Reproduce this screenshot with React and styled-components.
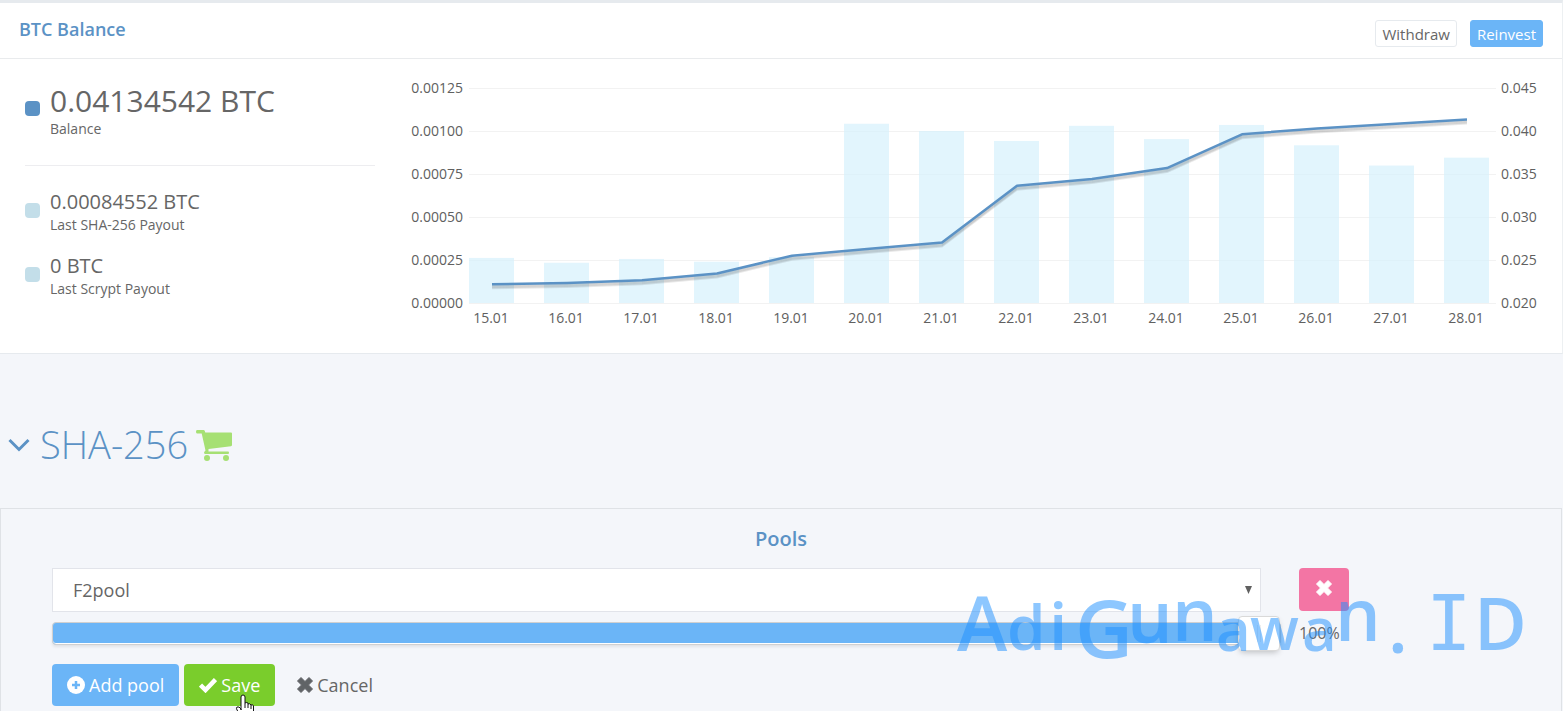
import React, { useState } from "react";
import styled, { createGlobalStyle, css } from "styled-components";

const GlobalStyle = createGlobalStyle`
  * {
    box-sizing: border-box;
  }

  body {
    margin: 0;
    background: #f4f6fa;
    color: #666;
    font-family: "Open Sans", sans-serif;
    font-size: 14px;
  }

  button,
  input,
  select {
    font-family: inherit;
  }
`;

const Page = styled.main`
  position: relative;
  overflow: hidden;
`;

const Panel = styled.section`
  background: #fff;
  border-top: 3px solid #e6eaee;
  border-bottom: 1px solid #e6eaee;
  border-right: 1px solid #edf0f2;
`;

const PanelHeader = styled.header`
  display: flex;
  align-items: center;
  justify-content: space-between;
  height: 56px;
  padding: 6px 19px 0;
  border-bottom: 1px solid #e9ebed;
`;

const PanelTitle = styled.h2`
  margin: 0 0 10px;
  color: #5b92c5;
  font-size: 18px;
  font-weight: 600;
  line-height: 24px;
`;

const HeaderActions = styled.div`
  display: flex;
  gap: 13px;
`;

const SmallButton = styled.button`
  height: 27px;
  padding: 0 6px;
  border: 1px solid ${(props) => (props.$primary ? "#6bb5f7" : "#e6eaee")};
  border-radius: 3px;
  background: ${(props) => (props.$primary ? "#6bb5f7" : "#fff")};
  color: ${(props) => (props.$primary ? "#fff" : "#666")};
  font-size: 15px;
  line-height: 24px;
  cursor: pointer;
`;

const PanelBody = styled.div`
  display: grid;
  grid-template-columns: 350px 1fr;
  gap: 30px;
  padding: 20px 19px 24px 25px;
`;

const Stats = styled.div`
  display: flex;
  flex-direction: column;
`;

const Stat = styled.div`
  display: flex;
  align-items: flex-start;
  gap: 10px;
  margin-bottom: ${(props) => (props.$main ? "30px" : "18px")};
`;

const Marker = styled.span`
  width: 15px;
  height: 15px;
  margin-top: ${(props) => (props.$main ? "22px" : "16px")};
  border-radius: 4px;
  background: ${(props) => (props.$main ? "#5b92c5" : "#c3dee9")};
`;

const StatValue = styled.div`
  font-size: ${(props) => (props.$main ? "30px" : "20px")};
  line-height: ${(props) => (props.$main ? "44px" : "30px")};
`;

const StatLabel = styled.div`
  font-size: 14px;
  line-height: ${(props) => (props.$main ? "12px" : "16px")};
`;

const Divider = styled.hr`
  width: 100%;
  margin: 0 0 21px;
  border: 0;
  border-top: 1px solid #ededf0;
`;

const ChartSvg = styled.svg`
  display: block;
  width: 100%;
  height: auto;

  text {
    fill: #606060;
    font-size: 14px;
  }
`;

const SectionHeading = styled.div`
  display: flex;
  align-items: center;
  height: 154px;
  padding: 28px 8px 0;
`;

const SectionTitle = styled.h1`
  margin: 0 8px 2px 10px;
  color: #5b92c5;
  font-size: 38px;
  font-weight: 300;
  line-height: 52px;
`;

const IconButton = styled.button`
  display: flex;
  padding: 0;
  border: 0;
  background: none;
  cursor: pointer;
`;

const PoolsPanel = styled.section`
  margin-right: 1px;
  padding: 17px 51px 5px;
  border: 1px solid #dfe2e6;
  border-bottom: 0;
`;

const PoolsTitle = styled.h3`
  margin: 0 0 16px;
  color: #5b92c5;
  font-size: 20px;
  font-weight: 600;
  line-height: 26px;
  text-align: center;
`;

const PoolGrid = styled.div`
  display: grid;
  grid-template-columns: 1fr 211px;
  column-gap: 38px;
  row-gap: 4px;
`;

const SelectWrap = styled.div`
  display: grid;
  align-items: center;

  > * {
    grid-area: 1 / 1;
  }
`;

const PoolSelect = styled.select`
  width: 100%;
  height: 44px;
  padding: 0 20px;
  appearance: none;
  border: 1px solid #e2e4ea;
  border-radius: 0;
  background: #fff;
  color: #666;
  font-size: 18px;
`;

const Arrow = styled.svg`
  justify-self: end;
  margin-right: 9px;
  pointer-events: none;
`;

const DeleteButton = styled.button`
  display: flex;
  align-items: center;
  justify-content: center;
  width: 50px;
  height: 43px;
  padding: 0 0 4px;
  border: 0;
  border-radius: 4px;
  background: #f375a4;
  cursor: pointer;
`;

const track = css`
  height: 23px;
  border: 1px solid #d0d0d0;
  border-radius: 4px;
  background: #6bb5f7;
  box-shadow: inset 0 -1px 0 #fff, 0 2px 3px rgba(0, 0, 0, 0.08);
`;

const Slider = styled.input`
  width: calc(100% + 20px);
  height: 34px;
  margin: 0;
  appearance: none;
  background: none;

  &::-webkit-slider-runnable-track {
    ${track}
  }

  &::-webkit-slider-thumb {
    width: 42px;
    height: 35px;
    margin-top: -7px;
    appearance: none;
    border: 1px solid #d9d9d9;
    border-radius: 4px;
    background: linear-gradient(#eee, #eee) 18px 8px / 1px 17px no-repeat,
      linear-gradient(#eee, #eee) 21px 8px / 1px 17px no-repeat, #fff;
    box-shadow: 0 3px 6px -2px rgba(0, 0, 0, 0.25);
  }
`;

const Percent = styled.output`
  font-size: 16px;
  line-height: 34px;
`;

const Actions = styled.div`
  display: flex;
  gap: 5px;
  margin-top: 14px;
`;

const colors = {
  add: "#6bb5f7",
  save: "#7acd2c",
  plain: "transparent",
};

const ActionButton = styled.button`
  position: relative;
  display: flex;
  align-items: center;
  gap: 4px;
  height: 42px;
  padding: 0 ${(props) => (props.$kind === "plain" ? "17px" : "15px")};
  border: 0;
  border-radius: 4px;
  background: ${(props) => colors[props.$kind]};
  color: ${(props) => (props.$kind === "plain" ? "#666" : "#fff")};
  font-size: 18px;
  line-height: 42px;
  cursor: pointer;
`;

const Pointer = styled.svg`
  position: absolute;
  top: 30px;
  left: 51px;
  pointer-events: none;
`;

const Watermark = styled.svg`
  position: absolute;
  right: 26px;
  bottom: 26px;
  pointer-events: none;
  fill: #1e90ff;
  opacity: 0.5;
  font-weight: 600;
`;

const history = [
  { day: "15.01", payout: 0.000262, balance: 0.02217 },
  { day: "16.01", payout: 0.000234, balance: 0.02233 },
  { day: "17.01", payout: 0.000256, balance: 0.02264 },
  { day: "18.01", payout: 0.00024, balance: 0.02343 },
  { day: "19.01", payout: 0.000266, balance: 0.0255 },
  { day: "20.01", payout: 0.001042, balance: 0.02627 },
  { day: "21.01", payout: 0.001, balance: 0.02703 },
  { day: "22.01", payout: 0.000942, balance: 0.03363 },
  { day: "23.01", payout: 0.00103, balance: 0.03442 },
  { day: "24.01", payout: 0.000953, balance: 0.03569 },
  { day: "25.01", payout: 0.001035, balance: 0.03962 },
  { day: "26.01", payout: 0.000917, balance: 0.04029 },
  { day: "27.01", payout: 0.000799, balance: 0.04081 },
  { day: "28.01", payout: 0.000845, balance: 0.04135 },
];

const payoutTicks = ["0.00125", "0.00100", "0.00075", "0.00050", "0.00025", "0.00000"];
const balanceTicks = ["0.045", "0.040", "0.035", "0.030", "0.025", "0.020"];

const plot = { left: 64, right: 1091, top: 9, height: 215, step: 75, bar: 45 };

function BalanceChart() {
  const bottom = plot.top + plot.height;
  const points = history
    .map((item, i) => {
      const x = plot.left + 23 + i * plot.step;
      const y = bottom - ((item.balance - 0.02) / 0.025) * plot.height;
      return `${x},${y}`;
    })
    .join(" ");

  return (
    <ChartSvg viewBox="0 0 1138 250" role="img" aria-label="BTC balance history">
      {payoutTicks.map((tick, i) => {
        const y = Math.round(plot.top + (i * plot.height) / 5);
        return (
          <g key={tick}>
            <rect x={plot.left} y={y} width={plot.right - plot.left} height="1" fill="#f2f2f2" />
            <text x="58" y={y + 5} textAnchor="end">
              {tick}
            </text>
            <text x="1096" y={y + 5}>
              {balanceTicks[i]}
            </text>
          </g>
        );
      })}
      {history.map((item, i) => {
        const height = (item.payout / 0.00125) * plot.height;
        const x = plot.left + i * plot.step;
        return (
          <g key={item.day}>
            <rect
              x={x}
              y={bottom - height}
              width={plot.bar}
              height={height}
              fill="#d4f0fc"
              fillOpacity="0.68"
            />
            <text x={x + 22} y={bottom + 20} textAnchor="middle">
              {item.day}
            </text>
          </g>
        );
      })}
      <g fill="none" strokeWidth="2" strokeLinejoin="round">
        {[4, 3, 2, 1].map((offset) => (
          <polyline
            key={offset}
            points={points}
            stroke="#000"
            strokeOpacity="0.09"
            transform={`translate(0 ${offset})`}
          />
        ))}
        <polyline points={points} stroke="#5b92c5" strokeWidth="2.5" />
      </g>
    </ChartSvg>
  );
}

function CrossIcon({ size, color }) {
  return (
    <svg width={size} height={size} viewBox="0 0 16 16" aria-hidden="true">
      <path
        d="M4 .5 8 4.5 12 .5 15.5 4 11.5 8 15.5 12 12 15.5 8 11.5 4 15.5 .5 12 4.5 8 .5 4Z"
        fill={color}
        stroke={color}
        strokeLinejoin="round"
      />
    </svg>
  );
}

function CartIcon() {
  return (
    <svg width="36" height="31" viewBox="0 0 36 31" fill="#a6e073" aria-hidden="true">
      <path d="M1 0h6.500q1 0 1.300 1l.5 1.500H35q1 0 1 1V15q0 1-1 1.200L12.500 19v2.500H32q1 0 1 1.200t-1 1.200H9q-1-.1-1-1.200 0-.8 1.500-2.200L5.700 3.500H1Q0 3.200 0 1.700 0 .3 1 0Z" />
      <circle cx="11" cy="28" r="3" />
      <circle cx="30" cy="28" r="3" />
    </svg>
  );
}

// each letter sits on its own baseline, like hand lettering
const letters = [
  { char: "A", x: 0, y: 61, size: 76 },
  { char: "d", x: 50, y: 60, size: 62 },
  { char: "i", x: 92, y: 60, size: 66 },
  { char: "G", x: 118, y: 68, size: 80 },
  { char: "u", x: 170, y: 53, size: 72 },
  { char: "n", x: 215, y: 51, size: 72 },
  { char: "a", x: 259, y: 61, size: 60 },
  { char: "w", x: 293, y: 60, size: 60 },
  { char: "a", x: 345, y: 61, size: 60 },
  { char: "n", x: 378, y: 51, size: 72 },
  { char: ".", x: 431, y: 63, size: 72 },
  { char: "I", x: 469, y: 60, size: 76, mono: true },
  { char: "D", x: 517, y: 60, size: 72 },
];

function SiteMark() {
  return (
    <Watermark width="580" height="125" viewBox="0 -30 580 125">
      <text>
        {letters.map((letter, i) => (
          <tspan
            key={i}
            x={letter.x}
            y={letter.y}
            fontSize={letter.size}
            fontFamily={letter.mono ? "DejaVu Sans Mono" : "Open Sans"}
            fontWeight={letter.mono ? 400 : 600}
          >
            {letter.char}
          </tspan>
        ))}
      </text>
    </Watermark>
  );
}

function StatRow({ value, label, main }) {
  return (
    <Stat $main={main}>
      <Marker $main={main} />
      <div>
        <StatValue $main={main}>{value}</StatValue>
        <StatLabel $main={main}>{label}</StatLabel>
      </div>
    </Stat>
  );
}

function App() {
  const [pool, setPool] = useState("F2pool");
  const [share, setShare] = useState(100);

  return (
    <Page>
      <GlobalStyle />
      <Panel>
        <PanelHeader>
          <PanelTitle>BTC Balance</PanelTitle>
          <HeaderActions>
            <SmallButton type="button">Withdraw</SmallButton>
            <SmallButton type="button" $primary>
              Reinvest
            </SmallButton>
          </HeaderActions>
        </PanelHeader>
        <PanelBody>
          <Stats>
            <StatRow main value="0.04134542 BTC" label="Balance" />
            <Divider />
            <StatRow value="0.00084552 BTC" label="Last SHA-256 Payout" />
            <StatRow value="0 BTC" label="Last Scrypt Payout" />
          </Stats>
          <BalanceChart />
        </PanelBody>
      </Panel>

      <SectionHeading>
        <IconButton type="button" aria-label="Collapse SHA-256">
          <svg width="22" height="14" viewBox="0 0 22 14" fill="none">
            <path d="M1.500 2 11 11.500 20.500 2" stroke="#5b92c5" strokeWidth="3" />
          </svg>
        </IconButton>
        <SectionTitle>SHA-256</SectionTitle>
        <IconButton type="button" aria-label="Buy SHA-256">
          <CartIcon />
        </IconButton>
      </SectionHeading>

      <PoolsPanel>
        <PoolsTitle>Pools</PoolsTitle>
        <PoolGrid>
          <SelectWrap>
            <PoolSelect
              aria-label="Pool"
              value={pool}
              onChange={(e) => setPool(e.target.value)}
            >
              <option>F2pool</option>
            </PoolSelect>
            <Arrow width="7" height="8" viewBox="0 0 7 8">
              <path d="M0 0h7L3.500 8Z" fill="#606060" />
            </Arrow>
          </SelectWrap>
          <DeleteButton type="button" aria-label="Remove pool">
            <CrossIcon size={16} color="#fff" />
          </DeleteButton>
          <Slider
            id="share"
            type="range"
            aria-label="Pool share"
            min="0"
            max="100"
            value={share}
            onChange={(e) => setShare(Number(e.target.value))}
          />
          <Percent htmlFor="share">{share}%</Percent>
        </PoolGrid>
        <Actions>
          <ActionButton type="button" $kind="add">
            <svg width="18" height="18" viewBox="0 0 18 18" aria-hidden="true">
              <circle cx="9" cy="9" r="9" fill="#fff" />
              <path d="M9 5v8M5 9h8" stroke="#6bb5f7" strokeWidth="2.5" />
            </svg>
            Add pool
          </ActionButton>
          <ActionButton type="button" $kind="save">
            <svg width="18" height="16" viewBox="0 0 18 16" aria-hidden="true">
              <path d="M1.500 8 6.500 13 16.500 2.500" fill="none" stroke="#fff" strokeWidth="4.500" />
            </svg>
            Save
            <Pointer width="20" height="26" viewBox="0 0 20 26">
              <path
                d="M6 16V3q0-2 2-2t2 2v6q1-1 3 0v1q2-1 3 1 2-1 2.500 1v6q0 3-2 5v2H7v-2l-5-7q-1-2 0-3 2-1 4 2Z"
                fill="#fff"
                stroke="#111"
              />
              <path d="M10 9v5M13 10v4M16 11v4" stroke="#111" />
            </Pointer>
          </ActionButton>
          <ActionButton type="button" $kind="plain">
            <CrossIcon size={16} color="#606366" />
            Cancel
          </ActionButton>
        </Actions>
      </PoolsPanel>
      <SiteMark />
    </Page>
  );
}

export default App;
